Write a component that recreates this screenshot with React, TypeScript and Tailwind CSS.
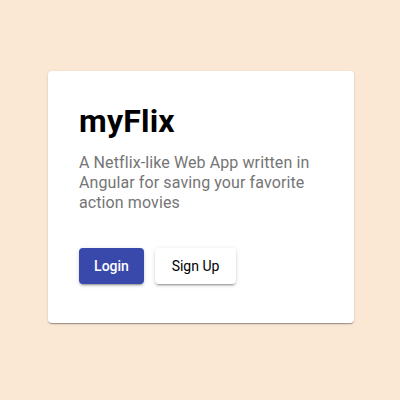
import React from "react";

const App = () => {
  return (
    <main className="min-h-[400px] w-full bg-[#fae7d4] pt-[71px] font-['Roboto',sans-serif]">
      <div className="ml-[48px] w-[306px] rounded-[4px] bg-white px-[31px] pt-[30px] pb-[39px] shadow-[0_2px_1px_-1px_rgba(0,0,0,0.2),0_1px_1px_0_rgba(0,0,0,0.14),0_1px_3px_0_rgba(0,0,0,0.12)]">
        <h1 className="text-[32px] font-bold leading-[40px] tracking-[0.2px] text-black">
          myFlix
        </h1>
        <p className="mt-[12px] text-[16px] leading-[20px] tracking-[0.1px] text-[#757575]">
          A Netflix-like Web App written in Angular for saving your favorite
          action movies
        </p>

        {/* Buttons */}
        <div className="mt-[35px] flex gap-[11px]">
          <button className="h-[36px] w-[65px] rounded-[4px] bg-[#3949ab] text-[14px] font-medium text-white shadow-[0_3px_1px_-2px_rgba(0,0,0,0.2),0_2px_2px_0_rgba(0,0,0,0.14),0_1px_5px_0_rgba(0,0,0,0.12)]">
            Login
          </button>
          <button className="h-[36px] w-[81px] rounded-[4px] bg-white text-[14px] font-normal text-black shadow-[0_3px_1px_-2px_rgba(0,0,0,0.2),0_2px_2px_0_rgba(0,0,0,0.14),0_1px_5px_0_rgba(0,0,0,0.12)]">
            Sign Up
          </button>
        </div>
      </div>
    </main>
  );
};

export default App;
